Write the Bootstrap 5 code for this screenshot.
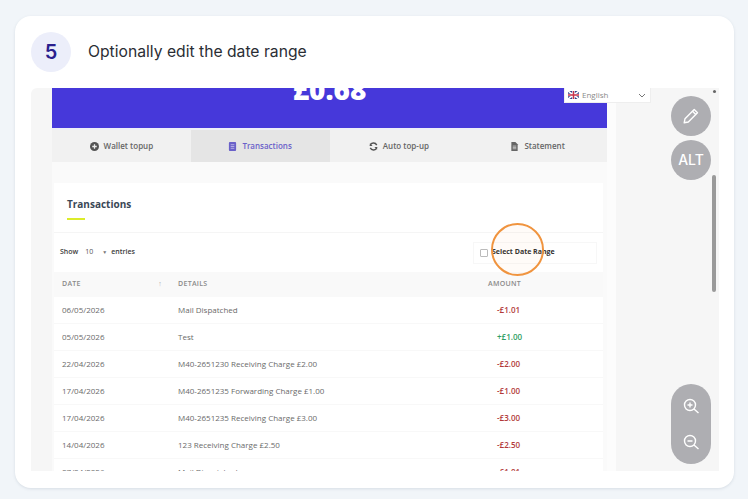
<!doctype html>
<html lang="en">
<head>
<meta charset="utf-8">
<title>Optionally edit the date range</title>
<link href="https://cdn.jsdelivr.net/npm/bootstrap@5.3.2/dist/css/bootstrap.min.css" rel="stylesheet">
<style>
  html,body{height:100%;}
  body{background:#f1f5f9;font-family:"Open Sans","Liberation Sans",sans-serif;overflow:hidden;}
  .step-card{width:719px;height:472px;margin:16px 0 0 15px;border:0;border-radius:16px;box-shadow:0 1px 3px rgba(100,116,139,.18);padding:16px 15px 17px 16px;}
  .step-num{width:40px;height:40px;background:#eceefa;color:#2b1f8e;font:600 20px/40px Inter,sans-serif;}
  .step-title{font:400 15.7px/1 Inter,sans-serif;color:#2a2d34;margin:0 0 0 17px;}
  .shot{position:relative;height:384px;margin-top:16px;overflow:hidden;background:#f6f6f6;border-radius:6px 0 0 0;width:688px;}
  .shot-gutter{width:21px;flex:none;}
  .shot-main{width:555px;flex:none;background:#fafafa;}
  .shot-side{width:9px;flex:none;background:#fcfcfc;}
  .hero{height:40px;background:#4638da;overflow:hidden;}
  .hero-amount{font:800 28px/32px "Open Sans",sans-serif;color:#fff;margin-top:-15px;}
  .hero-line{height:2px;background:#eeeef8;}
  .tab-cell{width:25%;height:32px;background:#f1f1f1;color:#666;font-size:8px;font-weight:600;}
  .tab-on{background:#e5e5e5;color:#6a61c9;}
  .tab-cell svg{width:9px;height:9px;margin-right:5px;}
  .tx-card{background:#fff;margin:21px 4px 0 2px;}
  .tx-head{height:50px;border-bottom:1px solid #f5f5f5;padding:14px 0 0 13px;}
  .tx-title{font-size:10px;line-height:14px;font-weight:700;color:#3a4756;}
  .tx-rule{width:18px;height:2px;background:#dcec2a;margin-top:7px;}
  .tx-tools{height:39px;padding:0 6px 0 6px;font-size:7px;font-weight:600;color:#3c3c3c;}
  .tx-entries b{font-weight:400;margin:0 9px 0 7px;color:#555;}
  .tx-entries i{font-style:normal;font-size:5px;margin-right:4px;color:#777;}
  .tx-range{width:124px;height:22px;border:1px solid #f7f7f7;padding-left:6px;color:#2d2d2d;font-weight:700;}
  .tx-check{width:8px;height:8px;border:1px solid #bbb;border-radius:1px;margin-right:4px;}
  .tx-table{width:100%;table-layout:fixed;margin:0;border-collapse:collapse;}
  .tx-table th{height:25px;background:#f9f9f9;font-size:7px;font-weight:600;letter-spacing:.3px;color:#8a8a8a;padding:0 0 0 8px;vertical-align:middle;}
  .tx-table td{height:26.9px;font-size:8px;color:#6a6a6a;padding:0 0 0 8px;border-bottom:1px solid #f8f8f8;vertical-align:middle;}
  .tx-table .col-date{width:116px;}
  .tx-table .col-detail{width:310px;padding-left:8px;}
  .tx-sort{color:#aaa;font-weight:400;}
  .tx-table td.amt-out{color:#b23a3a;font-weight:600;padding-left:17px;}
  .tx-table td.amt-in{color:#2f9e63;font-weight:600;padding-left:17px;}
  .lang-box{position:absolute;left:533px;top:0;width:87px;height:15px;background:#fff;border:1px solid #eee;border-top:0;font-size:8px;color:#8a8a8a;padding-left:3px;}
  .lang-box svg.flag{width:11px;height:8px;margin-right:3px;}
  .float-btn{position:absolute;left:640px;width:40px;height:40px;background:#aeaeb2;color:#fff;font:500 14px/40px Inter,sans-serif;}
  .float-zoom{position:absolute;left:640px;top:296px;width:40px;height:80px;background:#aeaeb2;border-radius:20px;padding:13px 0;}
  .float-zoom svg,.float-btn svg{width:18px;height:18px;}
  .scroll-thumb{position:absolute;left:681px;top:87px;width:4px;height:117px;background:#9a9a9a;border-radius:2px;}
  .scroll-dot{position:absolute;left:682px;top:2px;width:3px;height:3px;background:#666;border-radius:50%;}
  .focus-ring{position:absolute;left:460px;top:135px;width:53px;height:53px;border:2px solid #f0943f;border-radius:50%;background:rgba(255,190,130,.06);}
</style>
</head>
<body>

<div class="card step-card">
  <div class="d-flex align-items-center">
    <div class="step-num rounded-circle text-center">5</div>
    <div class="step-title">Optionally edit the date range</div>
  </div>

  <div class="shot d-flex">
    <div class="shot-gutter"></div>
    <div class="shot-main">
      <div class="hero d-flex justify-content-center align-items-start">
        <div class="hero-amount">£0.68</div>
      </div>
      <div class="hero-line"></div>

      <div class="d-flex">
        <div class="tab-cell d-flex align-items-center justify-content-center">
          <svg viewBox="0 0 10 10"><circle cx="5" cy="5" r="5" fill="#555"/><path d="M5 2.5v5M2.5 5h5" stroke="#eee" stroke-width="1.4"/></svg>Wallet topup
        </div>
        <div class="tab-cell tab-on d-flex align-items-center justify-content-center">
          <svg viewBox="0 0 10 10"><rect x="1" width="8" height="10" rx="1" fill="#6a61c9"/><path d="M3 3h4M3 5h4M3 7h4" stroke="#cfcbf0" stroke-width=".8"/></svg>Transactions
        </div>
        <div class="tab-cell d-flex align-items-center justify-content-center">
          <svg viewBox="0 0 10 10" fill="none"><path d="M8.6 3.4A4 4 0 0 0 1.2 4M1.4 6.6A4 4 0 0 0 8.8 6" stroke="#555" stroke-width="1.6"/><path d="M1 1.5v3h3M9 8.5v-3H6" fill="#555"/></svg>Auto top-up
        </div>
        <div class="tab-cell d-flex align-items-center justify-content-center">
          <svg viewBox="0 0 10 10"><path d="M1.5 0H6l2.5 2.5V10h-7z" fill="#666"/><path d="M3 4.5h4M3 6h4M3 7.500h4" stroke="#eee" stroke-width=".7"/></svg>Statement
        </div>
      </div>

      <div class="tx-card">
        <div class="tx-head">
          <div class="tx-title">Transactions</div>
          <div class="tx-rule"></div>
        </div>
        <div class="tx-tools d-flex align-items-center justify-content-between">
          <div class="tx-entries">Show<b>10</b><i>▼</i>entries</div>
          <div class="tx-range d-flex align-items-center"><span class="tx-check"></span>Select Date Range</div>
        </div>
        <table class="tx-table">
          <thead>
            <tr>
              <th class="col-date"><div class="d-flex justify-content-between pe-2">DATE<span class="tx-sort">↑</span></div></th>
              <th class="col-detail">DETAILS</th>
              <th>AMOUNT</th>
            </tr>
          </thead>
          <tbody>
            <tr><td>06/05/2026</td><td>Mail Dispatched</td><td class="amt-out">-£1.01</td></tr>
            <tr><td>05/05/2026</td><td>Test</td><td class="amt-in">+£1.00</td></tr>
            <tr><td>22/04/2026</td><td>M40-2651230 Receiving Charge £2.00</td><td class="amt-out">-£2.00</td></tr>
            <tr><td>17/04/2026</td><td>M40-2651235 Forwarding Charge £1.00</td><td class="amt-out">-£1.00</td></tr>
            <tr><td>17/04/2026</td><td>M40-2651235 Receiving Charge £3.00</td><td class="amt-out">-£3.00</td></tr>
            <tr><td>14/04/2026</td><td>123 Receiving Charge £2.50</td><td class="amt-out">-£2.50</td></tr>
            <tr><td>07/04/2026</td><td>Mail Dispatched</td><td class="amt-out">-£1.01</td></tr>
          </tbody>
        </table>
      </div>
    </div>
    <div class="shot-side"></div>

    <!-- things floating over the captured page -->
    <div class="lang-box d-flex align-items-center">
      <svg class="flag" viewBox="0 0 11 8"><rect width="11" height="8" fill="#2b3f86"/><path d="M0 0l11 8M11 0L0 8" stroke="#fff" stroke-width="1.6"/><path d="M5.500 0v8M0 4h11" stroke="#fff" stroke-width="2.600"/><path d="M5.500 0v8M0 4h11" stroke="#c8324a" stroke-width="1.400"/></svg>
      <span>English</span>
      <svg class="ms-auto me-1" width="8" height="5" viewBox="0 0 8 5" fill="none"><path d="M1 1l3 3 3-3" stroke="#777"/></svg>
    </div>
    <div class="float-btn rounded-circle d-flex align-items-center justify-content-center" style="top:8px">
      <svg viewBox="0 0 18 18" fill="none" stroke="#fff" stroke-width="1.400" stroke-linejoin="round"><path d="M12.200 2.500l3.300 3.300L6.300 15l-4.100.8.800-4.100z"/><path d="M10.500 4.200l3.300 3.300"/></svg>
    </div>
    <div class="float-btn rounded-circle text-center" style="top:52px">ALT</div>
    <div class="float-zoom d-flex flex-column align-items-center justify-content-between">
      <svg viewBox="0 0 18 18" fill="none" stroke="#fff" stroke-width="1.400"><circle cx="8" cy="8" r="5.500"/><path d="M12 12l4.500 4M8 5.500v5M5.500 8h5"/></svg>
      <svg viewBox="0 0 18 18" fill="none" stroke="#fff" stroke-width="1.400"><circle cx="8" cy="8" r="5.500"/><path d="M12 12l4.500 4M5.500 8h5"/></svg>
    </div>
    <div class="scroll-dot"></div>
    <div class="scroll-thumb"></div>
    <div class="focus-ring"></div>
  </div>
</div>

<script src="https://cdn.jsdelivr.net/npm/bootstrap@5.3.2/dist/js/bootstrap.bundle.min.js"></script>
</body>
</html>
